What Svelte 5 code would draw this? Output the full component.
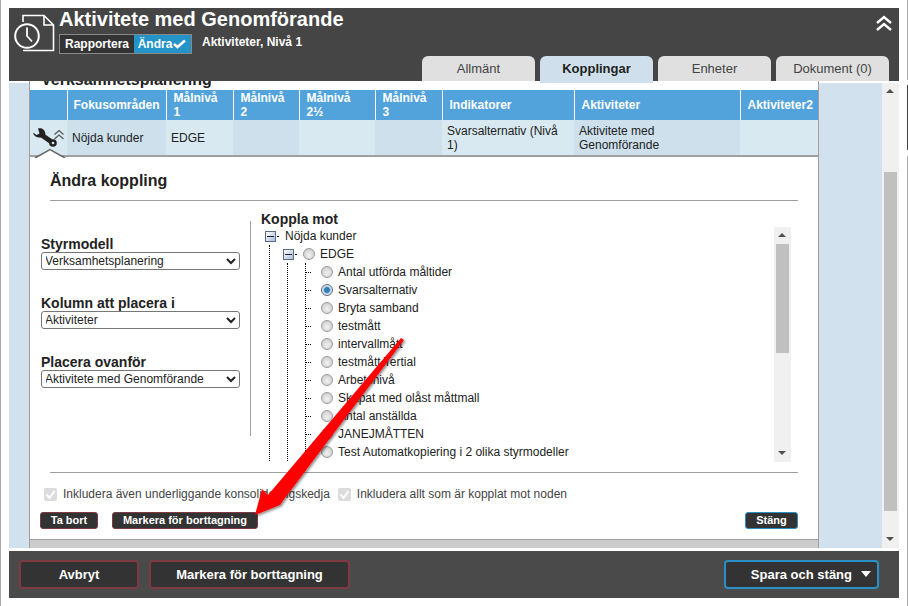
<script lang="ts">
const tabs = ['Allmänt', 'Kopplingar', 'Enheter', 'Dokument (0)'];

const columns = [
  { title: 'Fokusområden', value: 'Nöjda kunder' },
  { title: 'Målnivå 1', value: 'EDGE' },
  { title: 'Målnivå 2', value: '' },
  { title: 'Målnivå 2½', value: '' },
  { title: 'Målnivå 3', value: '' },
  { title: 'Indikatorer', value: 'Svarsalternativ (Nivå 1)' },
  { title: 'Aktiviteter', value: 'Aktivitete med Genomförande' },
  { title: 'Aktiviteter2', value: '' }
];
const widths = [37, 99, 67, 66, 76, 67, 132, 166, 78];

const selects = [
  { label: 'Styrmodell', value: 'Verksamhetsplanering' },
  { label: 'Kolumn att placera i', value: 'Aktiviteter' },
  { label: 'Placera ovanför', value: 'Aktivitete med Genomförande' }
];

const measures = [
  'Antal utförda måltider',
  'Svarsalternativ',
  'Bryta samband',
  'testmått',
  'intervallmått',
  'testmått Tertial',
  'Arbetsnivå',
  'Skapat med olåst måttmall',
  'Antal anställda',
  'JANEJMÅTTEN',
  'Test Automatkopiering i 2 olika styrmodeller'
];
</script>

<div class="page">
  <div class="window">
    <header class="head">
      <div class="head-top">
        <svg class="doc-icon" width="42" height="40" viewBox="0 0 42 40" fill="none" stroke="#fff" stroke-width="1.6">
          <path d="M9 8V1.5H30L39.5 11V36.5H9" />
          <path d="M30 1.5V11H39.5" />
          <circle cx="13" cy="22" r="11.8" fill="#454545" stroke-width="2" />
          <path d="M13 13.5V22L18 27.5" stroke-width="1.8" />
        </svg>
        <div class="head-text">
          <h1>Aktivitete med Genomförande</h1>
          <div class="head-sub">
            <div class="mode">
              <span class="mode-off">Rapportera</span>
              <span class="mode-on">Ändra<svg width="15" height="11" viewBox="0 0 15 11"><path d="M2 6L5.5 9L13 2.5" fill="none" stroke="#fff" stroke-width="2.6" /></svg></span>
            </div>
            <span class="level">Aktiviteter, Nivå 1</span>
          </div>
        </div>
        <svg class="collapse" width="18" height="16" viewBox="0 0 18 16" fill="none" stroke="#fff" stroke-width="2.4">
          <path d="M2 8L9 2L16 8" />
          <path d="M2 15L9 9L16 15" />
        </svg>
      </div>
      <nav class="tabs">
        {#each tabs as tab}
          <span class="tab" class:active={tab === 'Kopplingar'}>{tab}</span>
        {/each}
      </nav>
    </header>

    <main class="main">
      <div class="side"></div>
      <div class="panel">
        <div class="clipped"><span>Verksamhetsplanering</span></div>
        <div class="table-wrap">
          <table>
            <colgroup>
              {#each widths as w}<col style="width:{w}px" />{/each}
            </colgroup>
            <thead>
              <tr>
                <th></th>
                {#each columns as col}
                  <th class:two={col.title.startsWith('Målnivå')}>{col.title}</th>
                {/each}
              </tr>
            </thead>
            <tbody>
              <tr>
                <td class="tools">
                  <svg width="34" height="24" viewBox="0 0 34 24">
                    <path d="M1 6.5L4.5 9L7.5 7.5L6 2.5C9.5 1.5 13 3.5 13.5 8L10 11.5C6 12 2 11 1 6.5Z" fill="#222" />
                    <path d="M9 8.5L21 17" stroke="#222" stroke-width="5" />
                    <circle cx="21" cy="17" r="3.8" fill="#222" />
                    <circle cx="21" cy="17" r="1.3" fill="#d9e9f1" />
                    <path d="M22.5 8.5L27 4.5L31.5 8.5M22.5 13L27 9L31.5 13" fill="none" stroke="#555" stroke-width="1.2" />
                  </svg>
                </td>
                {#each columns as col}
                  <td>{col.value}</td>
                {/each}
              </tr>
            </tbody>
          </table>
          <svg class="notch" width="32" height="10" viewBox="0 0 32 10">
            <path d="M1 10L16 1.5L31 10Z" fill="#fff" />
            <path d="M1 10L16 1.5L31 10" fill="none" stroke="#666" stroke-width="1.5" />
          </svg>
        </div>

        <section class="edit">
          <h2>Ändra koppling</h2>
          <div class="columns">
            <div class="fields">
              {#each selects as s}
                <label>
                  <span>{s.label}</span>
                  <select><option>{s.value}</option></select>
                </label>
              {/each}
            </div>
            <div class="divider"></div>
            <div class="target">
              <h3>Koppla mot</h3>
              <div class="tree-box">
                <div class="tree">
                  <div class="row">
                    <span class="minus"></span><span class="dot"></span><span>Nöjda kunder</span>
                  </div>
                  <div class="branch">
                    <div class="row">
                      <span class="minus"></span><span class="dot"></span><span class="radio"></span><span>EDGE</span>
                    </div>
                    <div class="branch sub">
                      <div class="leaves">
                        {#each measures as m}
                          <div class="row">
                            <span class="dash"></span>
                            <span class="radio" class:checked={m === 'Svarsalternativ'}></span>
                            <span>{m}</span>
                          </div>
                        {/each}
                      </div>
                    </div>
                  </div>
                </div>
                <div class="mini-scroll">
                  <span class="up"></span>
                  <span class="mini-thumb"></span>
                  <span class="down"></span>
                </div>
              </div>
            </div>
          </div>
          <div class="rule"></div>
          <div class="checks">
            <span class="check first"><svg width="13" height="13" viewBox="0 0 13 13"><path d="M2.5 6.5L5.5 10L10.5 3" fill="none" stroke="#fff" stroke-width="2" /></svg></span>
            <span class="check-text">Inkludera även underliggande konsolideringskedja</span>
            <span class="check"><svg width="13" height="13" viewBox="0 0 13 13"><path d="M2.5 6.5L5.5 10L10.5 3" fill="none" stroke="#fff" stroke-width="2" /></svg></span>
            <span class="check-text">Inkludera allt som är kopplat mot noden</span>
          </div>
          <div class="actions">
            <button class="small danger ta-bort">Ta bort</button>
            <button class="small danger">Markera för borttagning</button>
            <button class="small close">Stäng</button>
          </div>
        </section>
        <div class="band"></div>
      </div>
      <div class="side right"></div>
      <div class="scrollbar">
        <span class="up"></span>
        <span class="thumb"></span>
        <span class="down"></span>
      </div>
    </main>

    <footer class="foot">
      <button class="big danger avbryt">Avbryt</button>
      <button class="big danger mark">Markera för borttagning</button>
      <button class="big save">Spara och stäng<span class="caret"></span></button>
    </footer>
  </div>

  <svg class="arrow" width="908" height="606" viewBox="0 0 908 606">
    <defs>
      <filter id="shade" x="-20%" y="-20%" width="140%" height="140%">
        <feDropShadow dx="1.5" dy="1.5" stdDeviation="1.2" flood-color="#000" flood-opacity="0.45" />
      </filter>
    </defs>
    <polygon points="255,515 262,489 268,495 401,338 404,340 285,498 280,505" fill="#f00" filter="url(#shade)" />
  </svg>
</div>

<style>
  :global(body) {
    margin: 0;
    background: #fff;
  }
  .page {
    position: relative;
    width: 908px;
    height: 606px;
    box-sizing: border-box;
    padding: 8px;
    overflow: hidden;
    border-left: 1px solid #aaa;
    font-family: "Liberation Sans", Arial, sans-serif;
    font-size: 12px;
    color: #222;
  }
  /* the neighbouring window's edge shows through at the far right */
  .page::after {
    content: "";
    position: absolute;
    top: 0;
    right: 0;
    bottom: 0;
    width: 1px;
    background: linear-gradient(
      #aaa 0 80px,
      #fff 80px 85px,
      #444 85px 150px,
      #fff 150px 156px,
      #aaa 156px
    );
  }
  .window {
    width: 890px;
    height: 590px;
    display: flex;
    flex-direction: column;
  }

  .head {
    height: 73px;
    flex-shrink: 0;
    background: #454545;
    display: flex;
    flex-direction: column;
    color: #fff;
  }
  .head-top {
    display: flex;
    align-items: flex-start;
    height: 48px;
  }
  .doc-icon {
    margin: 6px 0 0 5px;
    flex-shrink: 0;
  }
  .head-text {
    margin-left: 3px;
  }
  h1 {
    margin: 0;
    font-size: 20px;
    line-height: 22px;
    font-weight: 700;
  }
  .head-sub {
    display: flex;
    align-items: center;
    margin-top: 4px;
    gap: 10px;
  }
  .mode {
    display: flex;
    width: 133px;
    height: 20px;
    box-sizing: border-box;
    border: 1px solid #888;
    font-weight: 700;
    line-height: 18px;
  }
  .mode-off {
    width: 74px;
    background: #333;
    text-align: center;
  }
  .mode-on {
    flex: 1;
    background: #2494c8;
    text-align: center;
    white-space: nowrap;
  }
  .mode-on svg {
    vertical-align: -1px;
  }
  .level {
    font-weight: 700;
    margin-top: -4px;
  }
  .collapse {
    margin: 7px 6px 0 auto;
  }
  .tabs {
    margin-top: auto;
    display: flex;
    justify-content: flex-end;
    gap: 5px;
    padding-right: 10px;
  }
  .tab {
    width: 113px;
    height: 25px;
    box-sizing: border-box;
    background: #e0e0e0;
    color: #444;
    border-radius: 6px 6px 0 0;
    text-align: center;
    font-size: 13px;
    line-height: 25px;
  }
  .tab.active {
    position: relative;
    height: 27px;
    margin-bottom: -2px;
    background: #cfe0ec;
    color: #222;
    font-weight: 700;
  }

  .main {
    flex: 1;
    min-height: 0;
    display: flex;
    background: #fff;
  }
  .side {
    width: 20px;
    margin-top: 2px;
    background: #d1e2ee;
    flex-shrink: 0;
  }
  .side.right {
    width: 63px;
  }
  .panel {
    width: 790px;
    flex-shrink: 0;
    box-sizing: border-box;
    border-left: 1px solid #a0a0a0;
    border-right: 1px solid #a0a0a0;
    display: flex;
    flex-direction: column;
    overflow: hidden;
  }
  .clipped {
    height: 9px;
    overflow: hidden;
    padding-left: 11px;
    font-size: 16px;
    font-weight: 700;
    line-height: 16px;
  }
  .clipped span {
    display: block;
    margin-top: -9px;
  }
  .table-wrap {
    position: relative;
  }
  table {
    width: 788px;
    table-layout: fixed;
    border-collapse: collapse;
    border-bottom: 2px solid #a0a0a0;
  }
  th {
    height: 30px;
    padding: 0 6px 0 7px;
    box-sizing: border-box;
    background: #52a2dc;
    color: #fff;
    font-size: 12px;
    font-weight: 700;
    text-align: left;
    line-height: 14px;
    border-left: 1px solid #fff;
  }
  th:first-child {
    border-left: 0;
  }
  th:nth-child(2) {
    padding-left: 6px;
  }
  th.two {
    padding-right: 20px;
  }
  td {
    height: 36px;
    padding: 0 4px 0 5px;
    box-sizing: border-box;
    line-height: 14px;
    background: #d9e9f1;
  }
  td:nth-child(even) {
    background: #cde0ec;
  }
  td.tools {
    padding: 0;
  }
  td.tools svg {
    display: block;
    margin: 0 0 0 2px;
  }
  .notch {
    position: absolute;
    left: 4px;
    bottom: -1px;
  }

  .edit {
    flex: 1;
    min-height: 0;
    display: flex;
    flex-direction: column;
  }
  h2 {
    margin: 0 20px;
    height: 44px;
    box-sizing: border-box;
    border-bottom: 1px solid #a0a0a0;
    font-size: 16px;
    line-height: 48px;
    font-weight: 700;
  }
  .columns {
    display: flex;
    height: 261px;
    padding-left: 11px;
  }
  .fields {
    width: 199px;
    padding-top: 35px;
    display: flex;
    flex-direction: column;
    gap: 25px;
  }
  label {
    display: block;
  }
  label span {
    display: block;
    font-size: 14px;
    font-weight: 700;
    line-height: 16px;
  }
  select {
    display: block;
    width: 199px;
    height: 18px;
    padding: 0;
    text-indent: -1px;
    font-family: inherit;
    font-size: 12px;
    color: #222;
    background: #fff;
    border: 1px solid #767676;
    border-radius: 3px;
  }
  .divider {
    width: 1px;
    height: 215px;
    margin: 20px 10px 0 10px;
    background: #a0a0a0;
  }
  .target {
    width: 530px;
  }
  h3 {
    margin: 11px 0 0;
    font-size: 14px;
    line-height: 15px;
    font-weight: 700;
  }
  .tree-box {
    display: flex;
    height: 235px;
  }
  .tree {
    flex: 1;
    padding-left: 4px;
  }
  .row {
    height: 18px;
    display: flex;
    align-items: center;
    white-space: nowrap;
    color: #222;
  }
  .minus {
    position: relative;
    width: 11px;
    height: 11px;
    box-sizing: border-box;
    border: 1px solid #5a6b85;
    background: linear-gradient(135deg, #fff, #a9bedb);
    flex-shrink: 0;
  }
  .minus::after {
    content: "";
    position: absolute;
    left: 1px;
    right: 1px;
    top: 4px;
    height: 1px;
    background: #223;
  }
  .dot {
    width: 2px;
    height: 1px;
    margin: 0 6px 0 1px;
    background: #000;
  }
  .branch {
    margin-left: 4px;
    padding-left: 13px;
    border-left: 1px dotted #000;
  }
  .branch.sub {
    padding-left: 17px;
  }
  .leaves {
    border-left: 1px dotted #000;
  }
  .dash {
    width: 5px;
    margin-right: 10px;
    border-top: 1px dotted #000;
    flex-shrink: 0;
  }
  .radio {
    width: 12px;
    height: 12px;
    box-sizing: border-box;
    margin-right: 5px;
    border-radius: 50%;
    border: 1px solid #9a9a9a;
    background: radial-gradient(circle at 50% 60%, #f2f2f2, #c4c4c4);
    flex-shrink: 0;
  }
  .radio.checked {
    border-color: #667;
    background: radial-gradient(circle, #2f7fb8 0 2.5px, #9cc4e0 3.2px, #dfe6ec 4.5px, #b8b8b8);
  }
  .mini-scroll,
  .scrollbar {
    position: relative;
    width: 17px;
    background: #f0f0f0;
    flex-shrink: 0;
  }
  .scrollbar {
    margin-top: 2px;
  }
  .up,
  .down {
    position: absolute;
    left: 4px;
    width: 0;
    height: 0;
    border-left: 4px solid transparent;
    border-right: 4px solid transparent;
  }
  .up {
    top: 6px;
    border-bottom: 4px solid #505050;
  }
  .down {
    bottom: 7px;
    border-top: 4px solid #505050;
  }
  .mini-thumb,
  .thumb {
    position: absolute;
    left: 2px;
    width: 13px;
    background: #c0c0c0;
  }
  .mini-thumb {
    top: 17px;
    height: 109px;
  }
  .thumb {
    top: 89px;
    height: 339px;
  }
  .rule {
    height: 1px;
    margin: 10px 20px 0;
    background: #a0a0a0;
  }
  .checks {
    display: flex;
    align-items: center;
    height: 39px;
    padding-left: 14px;
    padding-top: 3px;
    box-sizing: border-box;
    color: #444;
  }
  .check {
    width: 13px;
    height: 13px;
    margin: 0 6px 0 8px;
    border-radius: 2px;
    background: #dcdcdc;
    flex-shrink: 0;
  }
  .check.first {
    margin-left: 0;
  }
  .check svg {
    display: block;
  }
  .actions {
    display: flex;
    padding: 0 20px 0 10px;
    gap: 14px;
  }
  button {
    font-family: inherit;
    font-weight: 700;
    color: #fff;
    background: #333;
    cursor: pointer;
    padding: 0;
    box-sizing: border-box;
  }
  .small {
    height: 17px;
    border-radius: 3px;
    font-size: 11px;
    line-height: 13px;
  }
  .small.danger {
    width: 146px;
    border: 1px solid #7d3a40;
  }
  .small.ta-bort {
    width: 58px;
  }
  .small.close {
    width: 53px;
    margin-left: auto;
    border: 1px solid #2a8fc4;
  }
  .band {
    height: 9px;
    flex-shrink: 0;
    box-sizing: border-box;
    border-top: 1px solid #a0a0a0;
    background: #ccc;
  }

  .foot {
    height: 47px;
    margin-top: 3px;
    flex-shrink: 0;
    box-sizing: border-box;
    padding: 9px 20px 9px 10px;
    background: #4a4a4a;
    display: flex;
    gap: 10px;
  }
  .big {
    height: 29px;
    border-radius: 4px;
    font-size: 13px;
  }
  .big.danger {
    border: 2px solid #7d3a40;
  }
  .avbryt {
    width: 120px;
  }
  .mark {
    width: 201px;
  }
  .save {
    width: 155px;
    margin-left: auto;
    border: 2px solid #2a8fc4;
    text-align: right;
    padding-right: 6px;
  }
  .caret {
    display: inline-block;
    margin-left: 9px;
    vertical-align: 2px;
    border-left: 5.5px solid transparent;
    border-right: 5.5px solid transparent;
    border-top: 6px solid #fff;
  }
  .arrow {
    position: absolute;
    left: -1px;
    top: 0;
    pointer-events: none;
  }
</style>
